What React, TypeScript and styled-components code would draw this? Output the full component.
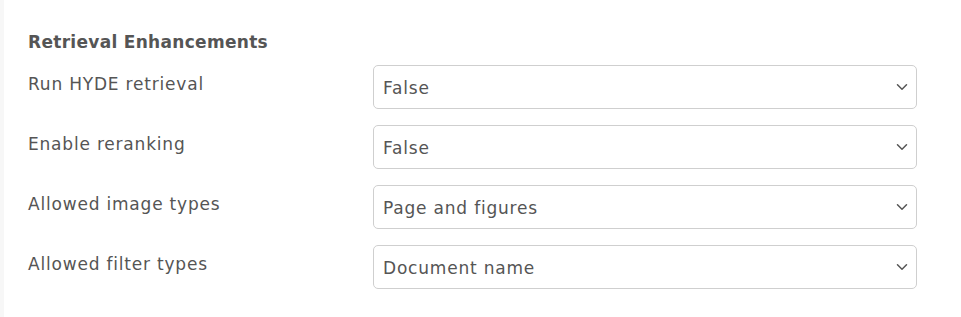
import React from "react";
import styled, { createGlobalStyle } from "styled-components";

const Global = createGlobalStyle`
  html, body { margin: 0; padding: 0; background: #fff; }
  body { font-family: "DejaVu Sans", "Liberation Sans", sans-serif; }
`;

const Page = styled.div`
  width: 961px;
  height: 317px;
  box-sizing: border-box;
  border-left: 4px solid #f7f7f7;
  padding: 31px 0 0 24px;
`;

const Heading = styled.h3`
  margin: 0 0 12px 0;
  font-size: 17px;
  font-weight: 700;
  letter-spacing: 0.3px;
  color: #555;
  line-height: 22px;
`;

const Form = styled.div`
  display: grid;
  grid-template-columns: 345px 544px;
  row-gap: 16px;
`;

const Label = styled.label`
  font-size: 17px;
  letter-spacing: 0.8px;
  color: #555;
  line-height: 22px;
  padding-top: 8px;
`;

const SelectBox = styled.div`
  position: relative;
  height: 44px;
  box-sizing: border-box;
  border: 1px solid #cfcfcf;
  border-radius: 5px;
  display: flex;
  align-items: center;
  padding: 2px 36px 0 9px;
  font-size: 17px;
  letter-spacing: 0.8px;
  color: #555;
  background: #fff;
`;

const Chevron = styled.svg`
  position: absolute;
  right: 8px;
  top: 50%;
  margin-top: -4px;
  width: 12px;
  height: 8px;
`;

const rows = [
  ["Run HYDE retrieval", "False"],
  ["Enable reranking", "False"],
  ["Allowed image types", "Page and figures"],
  ["Allowed filter types", "Document name"],
];

export default function App() {
  return (
    <>
      <Global />
      <Page>
        <Heading>Retrieval Enhancements</Heading>
        <Form>
          {rows.map(([l, v]) => (
            <React.Fragment key={l}>
              <Label>{l}</Label>
              <SelectBox>
                {v}
                <Chevron viewBox="0 0 12 8">
                  <path d="M1.5 1.8 L6 6.2 L10.5 1.8" fill="none" stroke="#555" strokeWidth="1.5" strokeLinecap="round" strokeLinejoin="round" />
                </Chevron>
              </SelectBox>
            </React.Fragment>
          ))}
        </Form>
      </Page>
    </>
  );
}
